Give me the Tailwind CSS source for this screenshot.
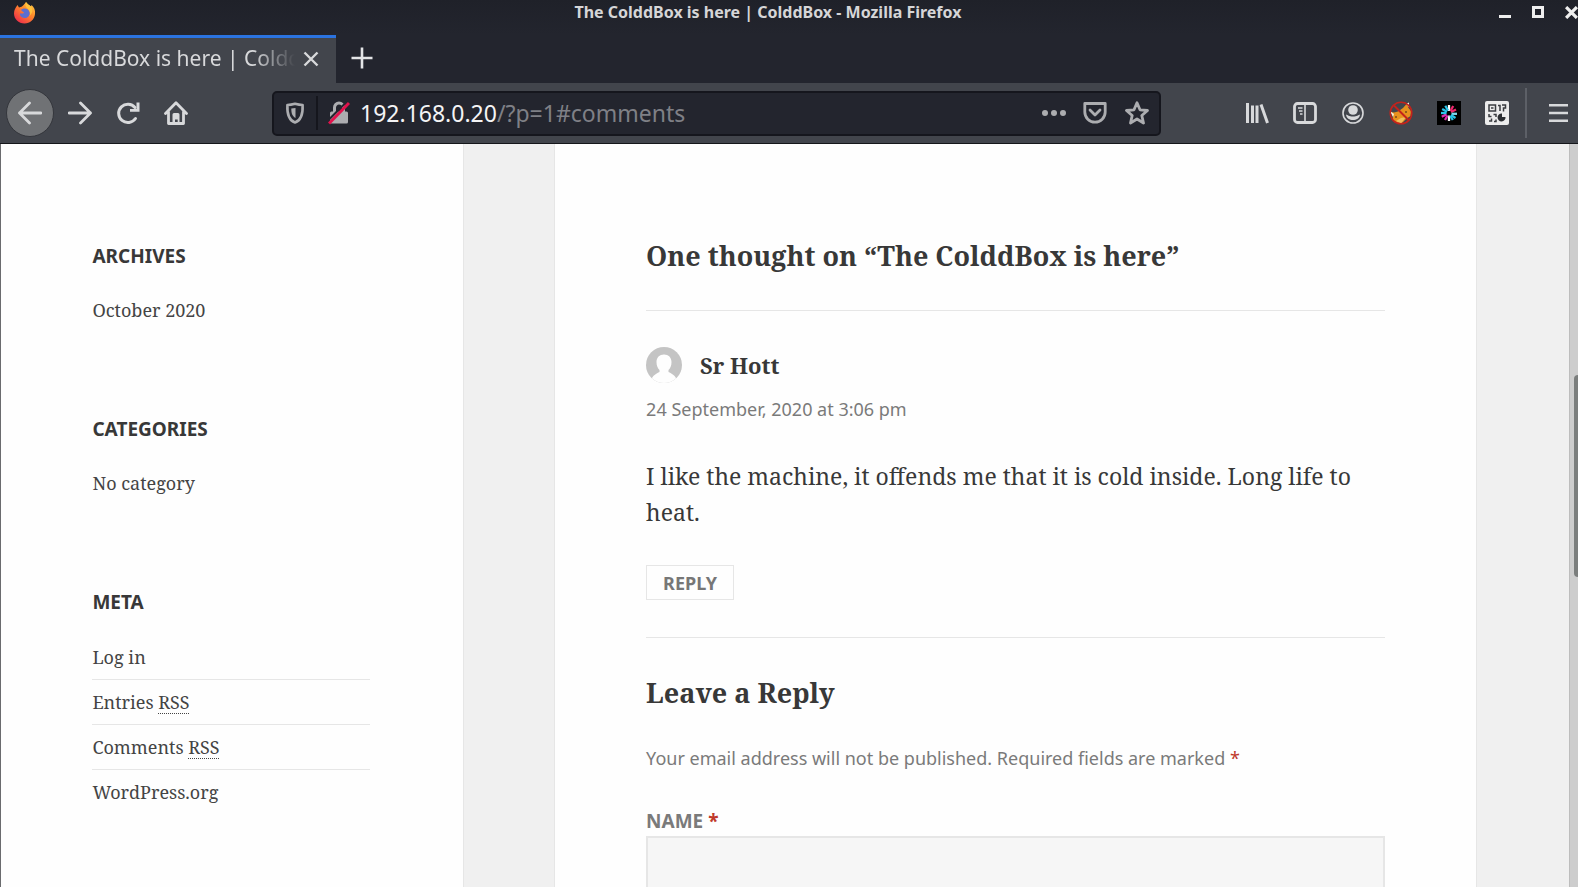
<!DOCTYPE html>
<html lang="en">
<head>
<meta charset="utf-8">
<title>The ColddBox is here | ColddBox</title>
<script src="https://cdn.jsdelivr.net/npm/@tailwindcss/browser@4"></script>
</head>
<body class="flex h-screen flex-col overflow-hidden bg-[#23252e] font-['Noto_Sans',sans-serif]">

<header class="shrink-0">
  <!-- window title bar -->
  <div class="flex h-[35px] items-start bg-linear-to-b from-[#1f2129] to-[#23252e] pl-[13px]">
    <svg class="mt-[1px] h-6 w-6 shrink-0" viewBox="0 0 24 24">
      <defs>
        <linearGradient id="fox" x1="1" y1="0" x2="0.2" y2="1"><stop offset="0" stop-color="#ffd94a"/><stop offset=".45" stop-color="#ff8a2a"/><stop offset="1" stop-color="#ee2a4c"/></linearGradient>
      </defs>
      <path d="M4.500 4 L6 6.500 L8.500 5.800 C10 5 11 3.500 13 1 C14 3.500 16 3.500 18 5.500 L18.500 4 C21 6 22.500 9 22 13 C21.500 18.500 17 22.500 11.500 22.500 C5.500 22.500 1 18 1 12.500 C1 9 2.500 7 4.500 4Z" fill="url(#fox)"/>
      <path d="M8 9 C10 6.500 15.500 7 16.500 11 C17.500 15 14 17.500 11 17 C8 16.500 6.500 14.500 7 12.500 L10 12.500 C11.500 12 11 11 9.500 10.500Z" fill="#5b6fd0"/>
      <path d="M13 1 C12 4 12.500 6 15 8 C17 10 18 12 16.500 15 C20 12 20 8 18 5.500 C16 4 14.500 3 13 1Z" fill="#ffc23c"/>
    </svg>
    <div class="min-w-0 flex-1 truncate text-center text-base font-bold leading-6 text-[#d6d6d8]">The ColddBox is here | ColddBox - Mozilla Firefox</div>
    <div class="flex shrink-0 items-center gap-[21px] pt-[6px] text-[#eeeeee]">
      <button aria-label="Minimise" class="h-3 w-3"><svg viewBox="0 0 12 12"><path d="M0 10.500H12" stroke="currentColor" stroke-width="3"/></svg></button>
      <button aria-label="Maximise" class="h-3 w-3"><svg viewBox="0 0 12 12"><path d="M1.500 1.500H10.500V10.500H1.500Z" fill="none" stroke="currentColor" stroke-width="3"/></svg></button>
      <button aria-label="Close window" class="h-3 w-[13px]"><svg viewBox="0 0 12 12"><path d="M1 1L11 11M11 1L1 11" stroke="currentColor" stroke-width="3"/></svg></button>
    </div>
  </div>

  <!-- tabs -->
  <div class="flex h-[48px] items-stretch">
    <div class="flex w-[336px] items-start border-t-3 border-[#2b73e0] bg-[#42454c] pt-[5px] pr-[17px] pl-[14px]">
      <div class="min-w-0 flex-1 overflow-hidden whitespace-nowrap mask-r-from-85% mask-r-to-100% text-[21px] leading-[30px] text-[#d8d9db]">The ColddBox is here | ColddBox</div>
      <button aria-label="Close tab" class="mt-[8px] ml-2 h-4 w-4 text-[#d8d9db]"><svg viewBox="0 0 16 16"><path d="M1.500 1.500L14.500 14.500M14.500 1.500L1.500 14.500" stroke="currentColor" stroke-width="2.400"/></svg></button>
    </div>
    <button aria-label="New tab" class="ml-[15px] flex w-[22px] items-center pb-[2px] text-[#e4e5e7]"><svg viewBox="0 0 22 22"><path d="M11 0.500V21.500M0.500 11H21.500" stroke="currentColor" stroke-width="2.600"/></svg></button>
  </div>

  <!-- navigation toolbar -->
  <div class="flex h-[61px] items-center border-b border-[#15161a] bg-[#42454c] pl-[6px] text-[#d8d9db]">
    <button aria-label="Back" class="flex h-12 w-12 shrink-0 items-center justify-center rounded-full border border-[#34363c] bg-[#707275]"><svg class="w-6" viewBox="0 0 24 24" fill="none" stroke="currentColor" stroke-width="2.800" stroke-linecap="round" stroke-linejoin="round"><path d="M23 12H1.500M11.500 2L1.500 12L11.500 22"/></svg></button>
    <button aria-label="Forward" class="ml-[14px] h-6 w-6 shrink-0"><svg viewBox="0 0 24 24" fill="none" stroke="currentColor" stroke-width="2.800" stroke-linecap="round" stroke-linejoin="round"><path d="M1 12H22.500M12.500 2L22.500 12L12.500 22"/></svg></button>
    <button aria-label="Reload" class="ml-[24px] h-6 w-6 shrink-0"><svg viewBox="0 0 24 24" fill="none" stroke="currentColor" stroke-width="3" stroke-linecap="round"><path d="M19.500 17.500A9.200 9.200 0 1 1 19 6.500"/><path d="M23.500 1.500V10.800H14V8H20.500V1.500Z" fill="currentColor" stroke="none"/></svg></button>
    <button aria-label="Home" class="ml-[24px] h-6 w-6 shrink-0"><svg viewBox="0 0 24 24" fill="none" stroke="currentColor" stroke-width="2.800" stroke-linecap="round" stroke-linejoin="round"><path d="M1.500 12.500L12 1.800L22.500 12.500M4.500 11V22.500H19.500V11"/><path d="M8.500 21.500V13.500Q8.500 12 10 12H14Q15.500 12 15.500 13.500V21.500H13.700V18.500H11V21.500Z" fill="currentColor" stroke="none"/></svg></button>

    <div class="ml-[84px] flex h-[45px] min-w-0 flex-1 items-center rounded-[5px] border-2 border-[#15161d] bg-[#23252e] pr-[10px] pl-[11px] text-[#acadb0]">
      <button aria-label="Tracking protection" class="h-[22px] w-5 shrink-0"><svg class="h-full w-full" viewBox="0 0 20 22" fill="none" stroke="currentColor" stroke-width="2.600"><path d="M10 1.800C7.500 2.500 4.500 3 2.400 3C2 11 3 18 10 20.500C17 18 18 11 17.600 3C15.500 3 12.500 2.500 10 1.800Z" stroke-linejoin="round"/><path d="M10.500 6V16C7 14 6.300 11 6.300 6.500Z" fill="currentColor" stroke="none"/></svg></button>
      <span class="ml-[11px] h-[34px] w-[2px] shrink-0 bg-[#15161d]"></span>
      <button aria-label="Connection is not secure" class="ml-[10px] h-6 w-[22px] shrink-0"><svg class="h-full w-full" viewBox="0 0 22 24"><path d="M6.500 12V6.500A4.500 4.500 0 0 1 15.500 6.500V12" fill="none" stroke="currentColor" stroke-width="3"/><rect x="2" y="10.500" width="18" height="12" rx="1.500" fill="currentColor"/><path d="M-1 20.500L19 0.500" stroke="#23252e" stroke-width="2"/><path d="M1 22.500L21 2" stroke="#e2124c" stroke-width="3"/></svg></button>
      <div role="textbox" aria-label="Address" class="ml-[10px] min-w-0 flex-1 truncate text-[23px] leading-[32px] text-[#7f8086]"><span class="text-[#f4f4f5]">192.168.0.20</span>/?p=1#comments</div>
      <button aria-label="Page actions" class="h-6 w-[26px] shrink-0"><svg viewBox="0 0 26 24" fill="currentColor"><circle cx="4" cy="12" r="3"/><circle cx="13" cy="12" r="3"/><circle cx="22" cy="12" r="3"/></svg></button>
      <button aria-label="Save to Pocket" class="ml-[16px] h-6 w-6 shrink-0"><svg viewBox="0 0 24 24" fill="none" stroke="currentColor" stroke-width="2.800" stroke-linecap="round" stroke-linejoin="round"><path d="M1.800 2.500H22.200V11A10.200 10.200 0 0 1 1.800 11Z"/><path d="M7 9L12 14L17 9"/></svg></button>
      <button aria-label="Bookmark this page" class="ml-[18px] h-6 w-6 shrink-0"><svg viewBox="0 0 24 24" fill="none" stroke="currentColor" stroke-width="2.800" stroke-linejoin="round"><path d="M12 1.800L15 8.800L22.500 9.500L16.800 14.500L18.500 22L12 18L5.500 22L7.200 14.500L1.500 9.500L9 8.800Z"/></svg></button>
    </div>

    <div class="ml-[84px] flex shrink-0 items-center gap-6">
      <button aria-label="Library" class="h-6 w-6"><svg viewBox="0 0 24 24" stroke="currentColor" stroke-width="3"><path d="M2.500 2V22M7.500 4.500V22M12 4.500V22M16 3.500L22.500 22"/></svg></button>
      <button aria-label="Sidebars" class="h-6 w-6"><svg viewBox="0 0 24 24" fill="none" stroke="currentColor" stroke-width="2.800"><rect x="1.500" y="2.500" width="21" height="19" rx="3"/><path d="M12 3V21" stroke-width="1.600"/><path d="M5 7H9.500M6 10H9.500M7 13H9.500" stroke-width="1.300"/></svg></button>
      <button aria-label="Account" class="h-6 w-6"><svg viewBox="0 0 24 24" fill="none" stroke="currentColor" stroke-width="1.600"><circle cx="12" cy="12" r="10"/><circle cx="12" cy="9" r="4.800" fill="currentColor" stroke="none"/><path d="M5 13.500C5.500 17.500 8.500 19 12 19C15.500 19 18.500 17.500 19 13.500C17.500 14 16 15.500 12 15.500C8 15.500 6.500 14 5 13.500Z" fill="currentColor" stroke="none"/></svg></button>
      <button aria-label="FoxyProxy" class="h-6 w-6"><svg viewBox="0 0 24 24"><path d="M2 11L5 11.500L9 10.500L14 7L18 2.500L19.500 7L22 10L21.500 15L17 18L12 23L6 21.500L3.500 18L4 15Z" fill="#e8921e"/><path d="M1 10L5 13L4 16ZM17 3L20 1.500L20 6Z" fill="#f7f0dc"/><path d="M7 20L12 17L17 16L12 22.500Z" fill="#f0bf60"/><circle cx="7" cy="16" r="1" fill="#7a4a18"/><circle cx="17" cy="11" r="1" fill="#7a4a18"/><circle cx="12" cy="12" r="10.800" fill="none" stroke="#c4221c" stroke-width="1.500"/><path d="M5 4.500L19.500 19" stroke="#c4221c" stroke-width="1.900"/></svg></button>
      <button aria-label="Extension" class="h-6 w-6"><svg viewBox="0 0 24 24" stroke-width="2.300"><rect width="24" height="24"/><path d="M12 4V10" stroke="#fff"/><path d="M16.200 5L13.500 10" stroke="#f0286e"/><path d="M19 8.500L14 11" stroke="#f0286e"/><path d="M20 12.800H14.500" stroke="#7fd8f0"/><path d="M18.500 17L14 14" stroke="#27c4e8"/><path d="M12 20V14.500" stroke="#fff"/><path d="M15.800 19L13.300 14.800" stroke="#27c4e8"/><path d="M8 19L10.500 14.500" stroke="#e22bb0"/><path d="M4.800 15.800L9.500 13.300" stroke="#e22bb0"/><path d="M4 12H9.500" stroke="#27c4e8"/><path d="M5.200 8L10 10.800" stroke="#27c4e8"/><path d="M8.300 4.800L11 9.500" stroke="#27c4e8"/></svg></button>
      <button aria-label="QR code" class="h-6 w-6"><svg viewBox="0 0 24 24"><rect width="24" height="24" rx="2" fill="#ececec"/><g fill="none" stroke="#3a3c40" stroke-width="1.500"><path d="M4 4H10.500V10H4ZM6 7H8.500M13 4.500H15V10M17 4H20.500V7H18.500V10.500M4 13V15.500H6.500M8.500 13.500H11V16M4 20H6.500V17.500M9 20.500H11V18.500"/></g><path d="M17 12.500V16H20.500A4 4 0 1 1 17 12.500Z" fill="#2c2e32"/></svg></button>
    </div>
    <span class="ml-[16px] h-[50px] w-[2px] shrink-0 bg-[#5d6067]"></span>
    <button aria-label="Open menu" class="mr-[10px] ml-[22px] h-[18px] w-[19px] shrink-0"><svg class="h-full w-full" viewBox="0 0 19 18"><path d="M0 1.300H19M0 9H19M0 16.700H19" stroke="currentColor" stroke-width="2.600"/></svg></button>
  </div>
</header>

<div class="flex min-h-0 flex-1">
  <div class="flex min-w-0 flex-1 overflow-hidden border-l border-[#6a6b6e] bg-[#f0f0f0] text-[#383838]">

    <!-- blog sidebar -->
    <aside class="w-[29.5%] shrink-0 border-r border-[#e6e6e6] bg-[#fefefe] pt-[100px] pl-[5.83%] pr-[5.92%] font-['Noto_Serif','DejaVu_Serif_Condensed','DejaVu_Serif',serif] text-[18px] leading-6 text-[#444444]">
      <section>
        <h2 class="font-['Noto_Sans',sans-serif] text-[19px] leading-6 font-bold text-[#383838]">ARCHIVES</h2>
        <ul class="mt-[30px]"><li><a href="#">October 2020</a></li></ul>
      </section>
      <section class="mt-[95px]">
        <h2 class="font-['Noto_Sans',sans-serif] text-[19px] leading-6 font-bold text-[#383838]">CATEGORIES</h2>
        <p class="mt-[30px]">No category</p>
      </section>
      <section class="mt-[95px]">
        <h2 class="font-['Noto_Sans',sans-serif] text-[19px] leading-6 font-bold text-[#383838]">META</h2>
        <ul class="mt-[21px] divide-y divide-[#e6e6e6]">
          <li class="py-[10px]"><a href="#">Log in</a></li>
          <li class="py-[10px]"><a href="#">Entries <abbr class="underline decoration-dotted decoration-1 underline-offset-4">RSS</abbr></a></li>
          <li class="py-[10px]"><a href="#">Comments <abbr class="underline decoration-dotted decoration-1 underline-offset-4">RSS</abbr></a></li>
          <li class="py-[10px]"><a href="#">WordPress.org</a></li>
        </ul>
      </section>
    </aside>

    <!-- comments -->
    <main class="ml-[5.75%] w-[58.9%] shrink-0 border-x border-[#e6e6e6] bg-[#fefefe] px-[5.83%] pt-24 font-['Noto_Serif','DejaVu_Serif_Condensed','DejaVu_Serif',serif]">
      <h2 class="border-b border-[#e6e6e6] pb-[38px] text-[27px] leading-8 font-bold">One thought on “The ColddBox is here”</h2>
      <article class="border-b border-[#e6e6e6] pt-9 pb-[37px]">
        <div class="flex items-start">
          <svg class="h-9 w-9" viewBox="0 0 36 36"><defs><clipPath id="av"><circle cx="18" cy="18" r="18"/></clipPath></defs><g clip-path="url(#av)"><rect width="36" height="36" fill="#c4c4c4"/><path d="M18 7.500C22.500 7.500 25.500 10.500 25.500 15C25.500 18.500 24.500 21 22.500 23V25C27 27 30.500 29.500 32 36H4C5.500 29.500 9 27 13.500 25V23C11.500 21 10.500 18.500 10.500 15C10.500 10.500 13.500 7.500 18 7.500Z" fill="#fefefe"/></g></svg>
          <b class="ml-[18px] text-[22px] leading-9">Sr Hott</b>
        </div>
        <a href="#" class="mt-[14px] block font-['Noto_Sans',sans-serif] text-lg leading-6 text-[#7a7a7a]"><time>24 September, 2020 at 3:06 pm</time></a>
        <p class="mt-[37px] text-[23px] leading-9">I like the machine, it offends me that it is cold inside. Long life to heat.</p>
        <button class="mt-[35px] block h-[35px] border border-[#e6e6e6] px-4 font-['Noto_Sans',sans-serif] text-lg leading-6 font-bold text-[#777777]">REPLY</button>
      </article>
      <h2 class="mt-[39px] text-[27px] leading-8 font-bold">Leave a Reply</h2>
      <form class="font-['Noto_Sans',sans-serif] text-lg leading-6 text-[#7a7a7a]">
        <p class="mt-[37px]">Your email address will not be published. Required fields are marked <span class="text-[#c0392b]">*</span></p>
        <label for="author" class="mt-[39px] block text-[19px] leading-6 font-bold">NAME <span class="text-[#c0392b]">*</span></label>
        <input id="author" type="text" class="mt-[3px] block h-16 w-full border-2 border-[#e6e6e6] bg-[#f6f6f6] px-3">
      </form>
    </main>
  </div>

  <!-- scrollbar -->
  <div class="w-[9px] shrink-0 border-l border-[#bdbdbd] bg-[#cdcdcd] pt-[231px] pl-1">
    <div class="h-[202px] rounded-l-[4px] bg-[#7b7e7d]"></div>
  </div>
</div>
</body>
</html>
